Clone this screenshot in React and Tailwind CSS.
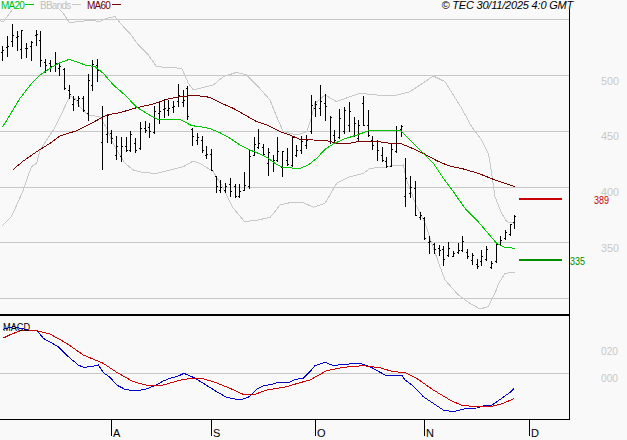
import React from 'react';

// all chart data read off at 3x, each set with its own offset
const conv = (pts, ox = 0, oy = 0) => pts.map(([x, y]) => `${ox + x / 3},${oy + y / 3}`).join(' ');

const ma20 = [
  conv([[7,382],[30,345],[60,295],[95,250],[120,225],[150,205],[180,188],[208,178],[235,187],[255,195],[285,200],[310,220],[340,255],[375,285],[410,322],[440,340],[470,357],[510,358],[540,358],[575,377],[600,380]]),
  conv([[30,206],[60,218],[90,235],[120,255],[150,270],[180,282],[205,295],[225,310],[250,323],[300,325],[325,315],[350,295],[375,268],[400,252],[430,238],[470,225],[505,213],[540,212],[570,212]], 200, 60),
  conv([[0,63],[30,60],[45,75],[75,105],[105,135],[130,160],[160,205],[190,245],[225,295],[260,330],[290,365],[320,400],[345,412],[375,415]], 390, 110),
].join(' ');

const ma60 = [
  conv([[40,508],[70,483],[110,455],[150,430],[180,408],[230,392],[270,372],[320,345],[360,338],[410,323],[460,312],[500,298],[540,290],[580,286]]),
  conv([[0,108],[30,112],[60,128],[100,145],[130,162],[170,185],[200,195],[240,215],[270,225],[300,238],[340,240],[380,242],[410,250],[450,250],[480,243],[520,243],[560,248]], 200, 60),
  conv([[0,100],[30,100],[60,112],[100,130],[140,152],[175,167],[225,178],[270,192],[310,208],[340,218],[375,230]], 390, 110),
].join(' ');

const bandTopA = conv([[0,62],[10,65],[25,45],[40,25]]);
const bandTop = [
  conv([[175,25],[190,40],[208,67],[240,65],[270,60],[300,65],[320,55],[345,50],[370,80],[390,100],[415,135],[445,165],[470,200],[545,205],[565,250],[580,270]]),
  conv([[0,85],[40,75],[70,50],[110,37],[140,45],[170,75],[210,120],[230,170],[250,215],[290,225],[320,215],[335,170],[345,130],[375,105],[410,125],[445,112],[480,100],[530,105],[590,105],[630,95]], 200, 60),
  conv([[40,228],[75,245],[100,285],[125,325]], 420, 0),
  conv([[245,50],[275,90],[295,130],[305,190],[315,260],[335,310],[350,335],[375,340]], 390, 110),
].join(' ');

const bandLow = [
  conv([[8,287],[35,258],[50,225],[70,180],[85,135],[95,110],[110,100],[120,60],[130,45],[160,0]], 0, 130),
  conv([[190,330],[210,288],[225,295],[240,322],[265,345],[300,350],[320,385],[335,420],[350,450],[375,490],[400,510],[430,518],[470,520],[550,500],[580,483],[600,490]]),
  conv([[40,335],[70,385],[100,445]], 200, 60),
  conv([[133,124],[165,122],[210,112],[225,95],[240,75],[270,68],[310,68],[330,77]], 200, 180),
  conv([[340,442],[375,430],[410,370],[450,350],[490,340],[510,325],[570,320]], 200, 60),
  conv([[0,168],[40,165],[50,210],[80,290],[105,340],[125,400],[150,470],[165,510],[205,555],[240,580],[270,597],[295,590],[315,550],[325,522],[345,490],[375,487]], 390, 110),
].join(' ');

const macdBlue = [
  conv([[8,88],[40,80],[85,90],[110,90],[130,115],[175,140],[205,170],[235,195],[250,202],[275,200],[295,195],[310,218],[330,232],[350,255],[375,268],[405,273],[435,268],[465,257],[490,243],[510,235],[535,228],[552,220],[580,232],[610,250],[650,275],[680,292],[720,300],[745,292],[770,268],[790,258],[820,252],[835,246],[870,246],[885,238],[910,235],[930,215]], 0, 300),
  conv([[15,197],[45,187],[70,197],[100,193],[150,190],[180,200],[225,225],[240,228],[275,225],[285,240],[310,258],[340,290],[370,310],[400,330],[430,335],[470,325],[500,324],[525,316],[545,316],[575,295],[600,277],[613,265]], 310, 300),
].join(' ');

const macdRed = [
  conv([[8,115],[35,102],[60,93],[110,92],[150,102],[200,130],[250,165],[310,190],[350,217],[400,245],[445,257],[490,255],[550,238],[600,234],[640,245],[690,265],[730,283],[765,283],[800,270],[860,260],[900,248],[930,240]], 0, 300),
  conv([[50,212],[100,202],[160,197],[210,203],[245,214],[285,218],[320,235],[370,270],[420,300],[455,316],[500,320],[550,318],[580,310],[613,295]], 310, 300),
].join(' ');

// x, high, low, open, close
const bars1 = [
  [7,140,182,158,150],[22,110,170,142,138],[37,72,138,125,105],[52,95,150,112,108],[64,90,176,148,92],
  [79,130,172,146,144],[94,125,182,138,126],[109,92,135,106,102],[121,95,200,122,180],[136,178,218,186,196],
  [151,182,215,190,200],[166,157,215,196,190],[178,190,225,205,198],[193,205,268,208,266],[208,255,295,270,282],
  [220,290,330,312,298],[235,288,318,300,296],[250,290,335,295,330],[265,222,362,340,240],[277,180,272,255,192],
  [292,178,244,195,212],[307,320,507,428,350],[322,342,428,402,345],[334,390,430,400,415],[349,410,478,465,440],
  [364,412,483,470,438],[379,412,455,438,452],[391,395,455,450,402],[406,415,458,430,452],[421,367,448,446,385],
  [436,365,398,385,390],[448,370,412,382,395],[463,320,400,398,335],[478,305,370,340,335],[493,298,352,328,325],
  [505,300,347,330,325],[520,305,338,322,318],[535,252,318,305,285],[550,272,318,308,300],[562,260,358,265,350],
  [577,385,435,388,410],[592,400,432,422,412],
];
const bars2 = [
  [7,228,278,242,272],[19,258,294,285,282],[33,268,332,282,330],[48,348,398,350,380],[61,362,398,390,382],
  [75,370,398,392,378],[90,355,408,372,395],[105,372,412,378,410],[118,372,412,410,395],[133,338,390,390,375],
  [148,270,385,380,288],[163,232,285,285,252],[175,208,265,262,250],[190,252,285,262,282],[205,265,347,310,278],
  [220,285,335,305,300],[232,232,305,302,275],[247,275,350,322,275],[262,265,315,302,312],[277,228,318,316,232],
  [290,255,290,285,270],[305,228,280,270,245],[320,225,265,255,242],[334,105,220,215,135],[347,125,170,145,132],
  [362,75,165,145,125],[377,102,182,130,140],[390,168,250,245,172],[403,210,250,225,240],[418,148,235,232,175],
  [433,142,220,215,150],[447,128,215,195,155],[462,172,230,225,190],[475,180,240,235,195],[490,108,197,130,195],
  [505,152,230,195,225],[517,230,268,240,255],[532,240,302,245,272],[547,262,305,285,302],[560,292,322,305,320],
];
const bars3 = [
  [5,100,170,168,118],[19,50,128,125,62],[33,45,80,58,50],[45,145,290,260,205],[60,198,262,250,232],
  [75,215,317,235,315],[90,308,328,322,315],[103,322,388,325,386],[118,378,430,398,395],[133,400,430,402,418],
  [147,405,435,415,420],[160,408,465,418,448],[175,397,440,435,415],[190,425,440,438,430],[205,400,430,428,420],
  [218,378,425,422,395],[232,418,445,428,440],[247,430,462,450,435],[262,448,475,462,470],[275,422,465,455,438],
  [289,408,452,448,418],[303,455,475,472,460],[318,400,458,455,402],[331,380,405,402,392],[346,362,387,385,368],
  [361,342,375,372,342],[373,315,355,338,320],
];

const toPx = (list, ox, oy) =>
  list.map(([x, h, l, o, c]) => [
    ox + Math.floor(x / 3),
    oy + Math.floor(h / 3),
    oy + Math.floor(l / 3),
    oy + Math.floor(o / 3),
    oy + Math.floor(c / 3),
  ]);

const bars = [...toPx(bars1, 0, 0), ...toPx(bars2, 200, 60), ...toPx(bars3, 390, 110)];

const gridY = [19, 75, 131, 187, 242, 298];
const months = [[111, 'A'], [211, 'S'], [315, 'O'], [424, 'N'], [529, 'D']];
const priceLabels = [['500', 85], ['450', 140], ['400', 196], ['350', 252]];

const Legend = ({ label, textClass, lineClass, w }) => (
  <div className="flex items-start">
    <span className={`block text-[10px] leading-[11px] tracking-[-0.75px] ${textClass} ${w}`}>{label}</span>
    <span className={`block w-[9px] h-px mt-[4px] ${lineClass}`} />
  </div>
);

const AxisLabel = ({ x, y, len, fill, children }) => (
  <text x={x} y={y} fontSize="11" fill={fill} textLength={len} lengthAdjust="spacingAndGlyphs">
    {children}
  </text>
);

export default function App() {
  return (
    <div className="w-[627px] h-[440px] bg-[#f9f9f9] overflow-hidden font-['Liberation_Sans',Arial,sans-serif]">
      {/* header row */}
      <div className="h-[9px] flex items-start justify-between pl-px pr-[54px]">
        <div className="flex items-start gap-[6px]">
          <Legend label="MA20" w="w-[24px]" textClass="text-[#00c000]" lineClass="bg-[#00c800]" />
          <Legend label="BBands" w="w-[32px]" textClass="text-[#c0c0c0]" lineClass="bg-[#c8c8c8]" />
          <Legend label="MA60" w="w-[25px]" textClass="text-[#700000]" lineClass="bg-[#780000]" />
        </div>
        <span className="block text-[11px] leading-[11px] italic text-black whitespace-nowrap tracking-[-0.2px]">
          © TEC 30/11/2025 4:0 GMT
        </span>
      </div>

      {/* chart */}
      <svg width="627" height="431" viewBox="0 9 627 431" className="block">
        <g shapeRendering="crispEdges">
          {gridY.map((y) => (
            <line key={y} x1="0" x2="569" y1={y + 0.5} y2={y + 0.5} stroke="#c8c8c8" />
          ))}
          <line x1="0" x2="569" y1="373.5" y2="373.5" stroke="#c8c8c8" />

          <polyline points={bandTopA} fill="none" stroke="#c8c8c8" />
          <polyline points={bandTop} fill="none" stroke="#c8c8c8" />
          <polyline points={bandLow} fill="none" stroke="#c8c8c8" />

          {bars.map(([x, h, l, o, c], i) => (
            <g key={i} fill="#000">
              <rect x={x} y={h} width="1" height={l - h + 1} />
              <rect x={x - 1} y={o} width="1" height="1" />
              <rect x={x + 1} y={c} width="1" height="1" />
            </g>
          ))}

          <polyline points={ma60} fill="none" stroke="#780000" />
          <polyline points={ma20} fill="none" stroke="#00c800" />

          <rect x="519" y="198" width="43" height="2" fill="#c80000" />
          <rect x="519" y="259" width="43" height="2" fill="#009000" />

          <rect x="0" y="314" width="569" height="2" fill="#000" />
          <rect x="0" y="419" width="569" height="1" fill="#000" />
          <rect x="569" y="9" width="1" height="411" fill="#000" />

          {months.map(([x]) => (
            <rect key={x} x={x} y="419" width="1" height="17" fill="#000" />
          ))}

          <polyline points={macdBlue} fill="none" stroke="#0000c8" />
          <polyline points={macdRed} fill="none" stroke="#d00000" />
        </g>

        <AxisLabel x="3" y="331" len="27" fill="#000">MACD</AxisLabel>
        {months.map(([x, m]) => (
          <text key={m} x={x + 2} y="437" fontSize="11" fill="#000">{m}</text>
        ))}
        {priceLabels.map(([t, y]) => (
          <AxisLabel key={t} x="601" y={y} len="18" fill="#c8c8c8">{t}</AxisLabel>
        ))}
        <AxisLabel x="601" y="355" len="17" fill="#c8c8c8">020</AxisLabel>
        <AxisLabel x="601" y="382" len="17" fill="#c8c8c8">000</AxisLabel>
        <AxisLabel x="594" y="204" len="15" fill="#c80000">389</AxisLabel>
        <AxisLabel x="570" y="265" len="15" fill="#009000">335</AxisLabel>
      </svg>
    </div>
  );
}
